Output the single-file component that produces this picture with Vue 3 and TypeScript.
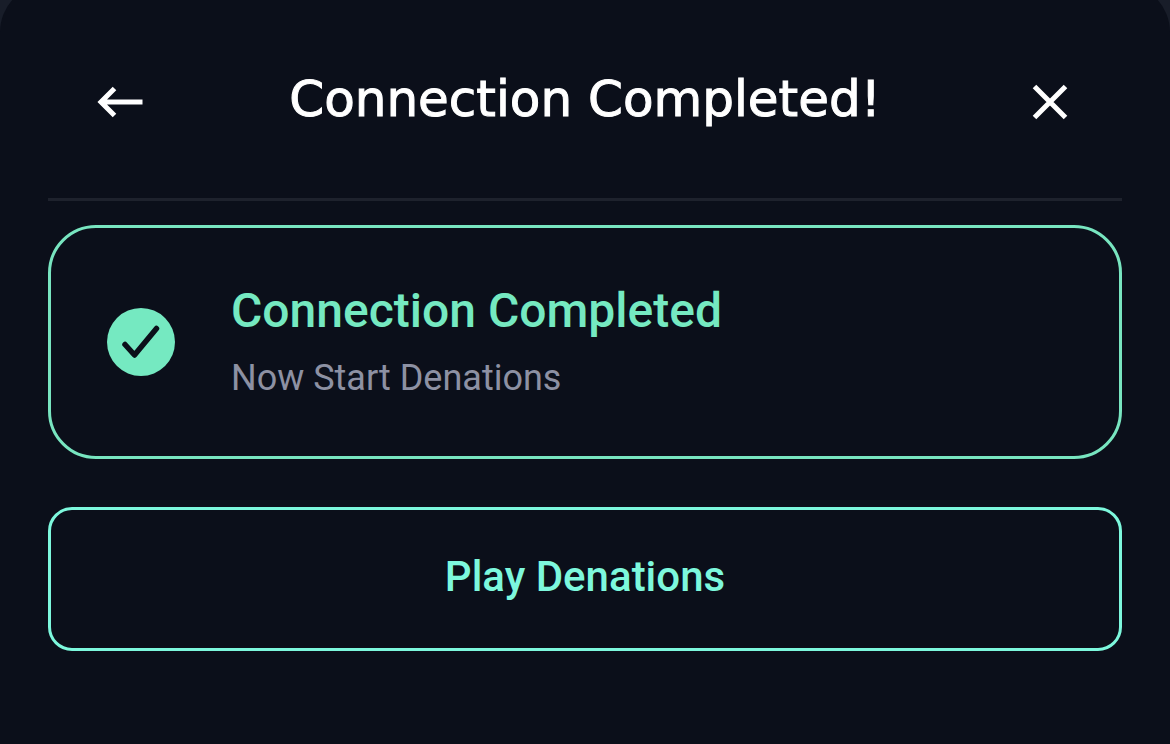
<script setup lang="ts">
const title = 'Connection Completed!'
const status = { heading: 'Connection Completed', detail: 'Now Start Denations' }
const actionLabel = 'Play Denations'
</script>

<template>
  <div class="backdrop">
    <main class="sheet">
      <header class="bar">
        <button class="icon-button" type="button" aria-label="Back">
          <svg width="48" height="48" viewBox="0 0 48 48" fill="none" stroke="#fff" stroke-width="5">
            <path d="M5 24H46.5M18.5 10.5L5 24L18.5 37.5" />
          </svg>
        </button>
        <h1 class="title">{{ title }}</h1>
        <button class="icon-button" type="button" aria-label="Close">
          <svg width="48" height="48" viewBox="0 0 48 48" fill="none" stroke="#fff" stroke-width="5">
            <path d="M8.500 8.500L39.500 39.500M39.500 8.500L8.500 39.500" />
          </svg>
        </button>
      </header>
      <section class="status">
        <svg class="check" width="68" height="68" viewBox="0 0 68 68" fill="none" aria-hidden="true">
          <circle cx="34" cy="34" r="34" fill="#75e9c1" />
          <path d="M18 36.500L27.500 47L49.500 20.500" stroke="#0b0f1a" stroke-width="5.500" stroke-linecap="round" stroke-linejoin="round" />
        </svg>
        <div>
          <h2 class="heading">{{ status.heading }}</h2>
          <p class="detail">{{ status.detail }}</p>
        </div>
      </section>
      <button class="action" type="button">{{ actionLabel }}</button>
    </main>
  </div>
</template>

<style>
body {
  margin: 0;
  background: #0b0f1a;
}
</style>

<style scoped>
.backdrop {
  overflow: hidden;
  min-height: 100vh;
  background: #181d29;
  font-family: Roboto, "Liberation Sans", sans-serif;
}
.sheet {
  box-sizing: border-box;
  min-height: calc(100vh + 16px);
  margin-top: -16px;
  padding: 16px 48px 48px;
  border-radius: 48px 48px 0 0;
  background: #0b0f1a;
}
.bar {
  display: flex;
  align-items: center;
  justify-content: space-between;
  box-sizing: border-box;
  height: 201px;
  padding: 6px 48px 0;
  border-bottom: 3px solid #1e222d;
}
.icon-button {
  display: flex;
  padding: 0;
  border: 0;
  background: none;
  cursor: pointer;
}
.title {
  margin: 0;
  padding-bottom: 6px;
  color: #fff;
  font: 400 50px/60px "DejaVu Sans", sans-serif;
  -webkit-text-stroke: 1px #fff;
  white-space: nowrap;
}
.status {
  display: flex;
  align-items: center;
  gap: 56px;
  margin-top: 24px;
  padding: 52px 56px;
  border: 3px solid #78e5c0;
  border-radius: 48px;
}
.check {
  flex: none;
}
.heading {
  margin: 0;
  color: #75e9c1;
  font-size: 48px;
  font-weight: 500;
  line-height: 62px;
}
.detail {
  margin: 10px 0 0;
  color: #8d91a3;
  font-size: 36px;
  line-height: 52px;
}
.action {
  display: block;
  width: 100%;
  margin-top: 48px;
  padding: 40px 24px 44px;
  border: 3px solid #7df8dd;
  border-radius: 24px;
  background: none;
  color: #7df8dd;
  font: 500 42px/54px Roboto, "Liberation Sans", sans-serif;
  cursor: pointer;
}
</style>
